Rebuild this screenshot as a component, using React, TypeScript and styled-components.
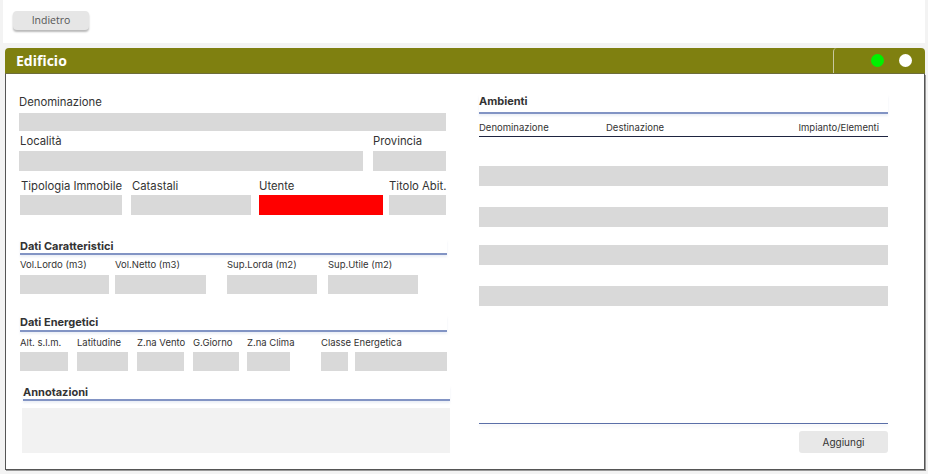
import styled, { createGlobalStyle } from 'styled-components'

const GlobalStyle = createGlobalStyle`
    body {
        margin: 0;
        background: #f3f3f3;
        font-family: Inter, "Liberation Sans", sans-serif;
        color: #333;
    }
`

const Page = styled.div`
    width: 928px;
    height: 474px;
    overflow: hidden;
`

const TopBar = styled.div`
    margin: 0 3px;
    height: 43px;
    background: #fff;
    padding: 8px 10px 0;
    box-sizing: border-box;
`

const BackButton = styled.button`
    width: 76px;
    height: 19px;
    border: none;
    border-radius: 4px;
    background: #e6e6e6;
    box-shadow: 0 2px 2px rgba(0, 0, 0, 0.28);
    font-family: "Open Sans", sans-serif;
    font-size: 10.5px;
    color: #555;
    padding: 0;
`

const Panel = styled.div`
    margin: 5px 3px 0 5px;
`

const Header = styled.div`
    height: 26px;
    background: #7f8010;
    border-radius: 4px 4px 0 0;
    display: flex;
    align-items: center;
    border-bottom: 1px solid #6d6d3a;
    box-sizing: border-box;
`

const Title = styled.div`
    flex: 1;
    padding-left: 11px;
    font-family: "Open Sans", sans-serif;
    font-weight: 700;
    font-size: 14px;
    color: #fff;
`

const Lights = styled.div`
    width: 92px;
    height: 100%;
    border-left: 1px solid #c8c8a0;
    border-radius: 4px 0 0 0;
    display: flex;
    align-items: center;
    justify-content: flex-end;
    gap: 15px;
    padding-right: 13px;
    box-sizing: border-box;
`

const Dot = styled.span<{ $color: string }>`
    width: 13px;
    height: 13px;
    border-radius: 50%;
    background: ${(p) => p.$color};
`

const Body = styled.div`
    height: 396px;
    background: #fff;
    border: 1px solid #555;
    border-top: none;
    box-shadow: 1px 1px 0 #999;
    box-sizing: border-box;
    display: flex;
`

const LeftCol = styled.div`
    width: 446px;
    padding: 21px 0 0 13px;
    box-sizing: border-box;
`

const RightCol = styled.div`
    width: 409px;
    margin-left: 27px;
    padding-top: 21px;
    display: flex;
    flex-direction: column;
`

const Row = styled.div<{ $top?: number }>`
    display: flex;
    margin-top: ${(p) => p.$top ?? 0}px;
`

const Field = styled.div<{ $w: number; $gap?: number }>`
    width: ${(p) => p.$w}px;
    margin-left: ${(p) => p.$gap ?? 0}px;
    display: flex;
    flex-direction: column;
`

const Label = styled.div<{ $small?: boolean; $indent?: number }>`
    font-size: ${(p) => (p.$small ? 9.5 : 11.3)}px;
    line-height: ${(p) => (p.$small ? 12 : 14)}px;
    padding-left: ${(p) => p.$indent ?? 0}px;
    color: #333;
    white-space: nowrap;
`

const Input = styled.div<{ $h: number; $mt: number; $red?: boolean }>`
    height: ${(p) => p.$h}px;
    margin-top: ${(p) => p.$mt}px;
    background: ${(p) => (p.$red ? '#ff0000' : '#d9d9d9')};
`

const Section = styled.div<{ $top: number; $w?: number; $indent?: number; $pb?: number }>`
    margin-top: ${(p) => p.$top}px;
    margin-left: ${(p) => p.$indent ?? 0}px;
    width: ${(p) => p.$w ?? 427}px;
    font-size: 11px;
    font-weight: 700;
    color: #333;
    line-height: 13px;
    padding-bottom: ${(p) => p.$pb ?? 1}px;
    border-bottom: 2px solid #8294c4;
    box-shadow: 0 2px 2px rgba(130, 148, 196, 0.15);
`

const Notes = styled.div`
    width: 428px;
    height: 45px;
    margin: 7px 0 0 3px;
    background: #f2f2f2;
`

const TableHead = styled.div`
    display: flex;
    margin-top: 8px;
    padding: 0 9px 2px 0;
    border-bottom: 1px solid #1e2440;
    font-size: 9.5px;
    line-height: 12px;
    color: #333;
`

const HeadCell = styled.div<{ $w?: number; $right?: boolean }>`
    width: ${(p) => (p.$w ? `${p.$w}px` : 'auto')};
    flex: ${(p) => (p.$w ? 'none' : 1)};
    text-align: ${(p) => (p.$right ? 'right' : 'left')};
`

const TableRow = styled.div<{ $top: number }>`
    height: 20px;
    margin-top: ${(p) => p.$top}px;
    background: #d9d9d9;
`

const Spacer = styled.div`
    flex: 1;
`

const BottomLine = styled.div`
    border-bottom: 1px solid #5b6fa8;
    box-shadow: 0 2px 3px rgba(91, 111, 168, 0.15);
`

const AddButton = styled.button`
    align-self: flex-end;
    width: 89px;
    height: 22px;
    margin: 7px 0 16px;
    border: none;
    border-radius: 3px;
    background: #e8e8e8;
    font-family: Inter, sans-serif;
    font-size: 10px;
    color: #333;
    padding: 0;
`

export default function App() {
    return (
        <Page>
            <GlobalStyle />
            <TopBar>
                <BackButton>Indietro</BackButton>
            </TopBar>
            <Panel>
                <Header>
                    <Title>Edificio</Title>
                    <Lights>
                        <Dot $color="#00f000" />
                        <Dot $color="#ffffff" />
                    </Lights>
                </Header>
                <Body>
                    <LeftCol>
                        <Row>
                            <Field $w={427}>
                                <Label>Denominazione</Label>
                                <Input $h={18} $mt={4} />
                            </Field>
                        </Row>
                        <Row $top={3}>
                            <Field $w={344}>
                                <Label $indent={1}>Località</Label>
                                <Input $h={20} $mt={3} />
                            </Field>
                            <Field $w={73} $gap={10}>
                                <Label>Provincia</Label>
                                <Input $h={20} $mt={3} />
                            </Field>
                        </Row>
                        <Row $top={8}>
                            <Field $w={102} $gap={1}>
                                <Label $indent={1}>Tipologia Immobile</Label>
                                <Input $h={20} $mt={2} />
                            </Field>
                            <Field $w={120} $gap={9}>
                                <Label $indent={1}>Catastali</Label>
                                <Input $h={20} $mt={2} />
                            </Field>
                            <Field $w={124} $gap={8}>
                                <Label>Utente</Label>
                                <Input $h={20} $mt={2} $red />
                            </Field>
                            <Field $w={57} $gap={6}>
                                <Label>Titolo Abit.</Label>
                                <Input $h={20} $mt={2} />
                            </Field>
                        </Row>

                        <Section $top={25} $indent={1} $pb={0}>Dati Caratteristici</Section>
                        <Row $top={4}>
                            <Field $w={89} $gap={1}>
                                <Label $small>Vol.Lordo (m3)</Label>
                                <Input $h={19} $mt={4} />
                            </Field>
                            <Field $w={91} $gap={6}>
                                <Label $small>Vol.Netto (m3)</Label>
                                <Input $h={19} $mt={4} />
                            </Field>
                            <Field $w={90} $gap={21}>
                                <Label $small>Sup.Lorda (m2)</Label>
                                <Input $h={19} $mt={4} />
                            </Field>
                            <Field $w={90} $gap={11}>
                                <Label $small>Sup.Utile (m2)</Label>
                                <Input $h={19} $mt={4} />
                            </Field>
                        </Row>

                        <Section $top={22} $indent={1}>Dati Energetici</Section>
                        <Row $top={5}>
                            <Field $w={48} $gap={1}>
                                <Label $small>Alt. s.l.m.</Label>
                                <Input $h={19} $mt={3} />
                            </Field>
                            <Field $w={51} $gap={9}>
                                <Label $small>Latitudine</Label>
                                <Input $h={19} $mt={3} />
                            </Field>
                            <Field $w={47} $gap={9}>
                                <Label $small>Z.na Vento</Label>
                                <Input $h={19} $mt={3} />
                            </Field>
                            <Field $w={46} $gap={9}>
                                <Label $small>G.Giorno</Label>
                                <Input $h={19} $mt={3} />
                            </Field>
                            <Field $w={43} $gap={8}>
                                <Label $small>Z.na Clima</Label>
                                <Input $h={19} $mt={3} />
                            </Field>
                            <Field $w={126} $gap={31}>
                                <Label $small>Classe Energetica</Label>
                                <Row $top={3}>
                                    <Field $w={27}>
                                        <Input $h={19} $mt={0} />
                                    </Field>
                                    <Field $w={92} $gap={7}>
                                        <Input $h={19} $mt={0} />
                                    </Field>
                                </Row>
                            </Field>
                        </Row>

                        <Section $top={15} $indent={4} $w={427} $pb={0}>Annotazioni</Section>
                        <Notes />
                    </LeftCol>

                    <RightCol>
                        <Section $top={0} $w={409} $pb={4}>Ambienti</Section>
                        <TableHead>
                            <HeadCell $w={127}>Denominazione</HeadCell>
                            <HeadCell>Destinazione</HeadCell>
                            <HeadCell $right>Impianto/Elementi</HeadCell>
                        </TableHead>
                        <TableRow $top={29} />
                        <TableRow $top={21} />
                        <TableRow $top={18} />
                        <TableRow $top={21} />
                        <Spacer />
                        <BottomLine />
                        <AddButton>Aggiungi</AddButton>
                    </RightCol>
                </Body>
            </Panel>
        </Page>
    )
}
